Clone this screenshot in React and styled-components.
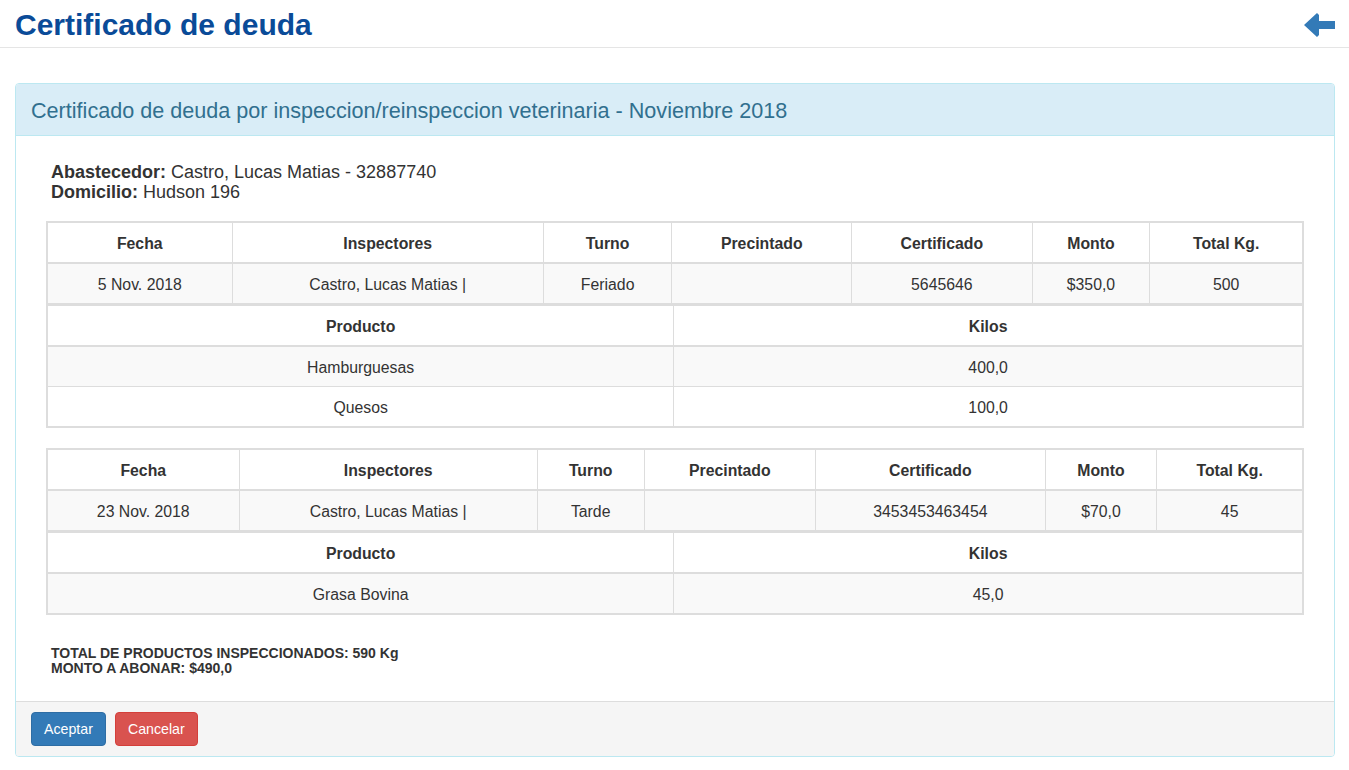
import React from "react";
import styled, { createGlobalStyle } from "styled-components";

const GlobalStyle = createGlobalStyle`
  html, body { margin: 0; padding: 0; background: #fff; }
  body {
    font-family: "Liberation Sans", Arial, Helvetica, sans-serif;
    font-size: 14px;
    line-height: 20px;
    color: #333;
  }
  * { box-sizing: border-box; }
`;

const Page = styled.div`
  display: flex;
  flex-direction: column;
`;

const TopBar = styled.header`
  display: flex;
  align-items: center;
  justify-content: space-between;
  height: 48px;
  padding: 3px 14px 0 15px;
  border-bottom: 1px solid #e5e5e5;
`;

const Title = styled.h1`
  margin: 0;
  font-size: 30px;
  line-height: 34px;
  font-weight: bold;
  color: #0a4b98;
`;

const BackLink = styled.a`
  display: flex;
  align-items: center;
  cursor: pointer;
  margin-top: -1px;
`;

const Content = styled.main`
  padding: 35px 14px 13px 15px;
`;

const Panel = styled.section`
  border: 1px solid #bce8f1;
  border-radius: 4px;
  background: #fff;
  overflow: hidden;
`;

const PanelHeading = styled.div`
  background: #d9edf7;
  border-bottom: 1px solid #bce8f1;
  padding: 16px 15px 14px;
  color: #31708f;
  font-size: 21.6px;
  line-height: 21px;
`;

const PanelBody = styled.div`
  padding: 26px 30px 25px 30px;
  display: flex;
  flex-direction: column;
`;

const Info = styled.div`
  margin: 0 0 19px 5px;
  font-size: 18px;
  line-height: 20px;
  b { font-weight: bold; }
`;

const Block = styled.div`
  border: 1px solid #ddd;
  margin-bottom: ${(p) => (p.$last ? "0" : "20px")};
`;

const Table = styled.table`
  width: 100%;
  border-collapse: collapse;
  table-layout: fixed;
  border: 1px solid #ddd;
  font-size: 15.8px;
  ${(p) => (p.$sub ? "border-top: 2px solid #ddd;" : "")}
`;

const Th = styled.th`
  border: 1px solid #ddd;
  border-bottom-width: 2px;
  padding: 10px 8px 8px;
  font-weight: bold;
  text-align: center;
  line-height: 21px;
  background: #fff;
`;

const Tr = styled.tr`
  background: ${(p) => (p.$striped ? "#f9f9f9" : "#fff")};
`;

const Td = styled.td`
  border: 1px solid #ddd;
  padding: 10px 8px 8px;
  text-align: center;
  line-height: 21px;
`;

const Totals = styled.div`
  margin: 31px 0 0 5px;
  font-size: 14px;
  line-height: 15px;
  font-weight: bold;
`;

const PanelFooter = styled.div`
  background: #f5f5f5;
  border-top: 1px solid #ddd;
  padding: 10px 15px;
  display: flex;
  gap: 9px;
`;

const Button = styled.button`
  font-family: inherit;
  font-size: 14.2px;
  line-height: 20px;
  padding: 6px 12px;
  border-radius: 4px;
  color: #fff;
  cursor: pointer;
  border: 1px solid ${(p) => (p.$variant === "danger" ? "#d43f3a" : "#2e6da4")};
  background: ${(p) => (p.$variant === "danger" ? "#d9534f" : "#337ab7")};
`;

const certificates = [
  {
    widths: [185, 312, 129, 180, 181, 118, 153],
    fecha: "5 Nov. 2018",
    inspectores: "Castro, Lucas Matias |",
    turno: "Feriado",
    precintado: "",
    certificado: "5645646",
    monto: "$350,0",
    total: "500",
    productos: [
      ["Hamburguesas", "400,0"],
      ["Quesos", "100,0"],
    ],
  },
  {
    widths: [192, 299, 107, 172, 230, 112, 146],
    fecha: "23 Nov. 2018",
    inspectores: "Castro, Lucas Matias |",
    turno: "Tarde",
    precintado: "",
    certificado: "3453453463454",
    monto: "$70,0",
    total: "45",
    productos: [["Grasa Bovina", "45,0"]],
  },
];

const headers = ["Fecha", "Inspectores", "Turno", "Precintado", "Certificado", "Monto", "Total Kg."];

const pct = (w, total) => `${((w / total) * 100).toFixed(3)}%`;

function ArrowLeft() {
  return (
    <svg width="31" height="24" viewBox="0 0 31 24">
      <path d="M0 12 L13 0 L15 2 L15 8 L31 8 L31 16 L15 16 L15 22 L13 24 Z" fill="#337ab7" />
    </svg>
  );
}

function CertificateBlock({ data, last }) {
  const sum = data.widths.reduce((a, b) => a + b, 0);
  return (
    <Block $last={last}>
      <Table>
        <colgroup>
          {data.widths.map((w, i) => (
            <col key={i} style={{ width: pct(w, sum) }} />
          ))}
        </colgroup>
        <thead>
          <tr>
            {headers.map((h) => (
              <Th key={h}>{h}</Th>
            ))}
          </tr>
        </thead>
        <tbody>
          <Tr $striped>
            <Td>{data.fecha}</Td>
            <Td>{data.inspectores}</Td>
            <Td>{data.turno}</Td>
            <Td>{data.precintado}</Td>
            <Td>{data.certificado}</Td>
            <Td>{data.monto}</Td>
            <Td>{data.total}</Td>
          </Tr>
        </tbody>
      </Table>
      <Table $sub>
        <colgroup>
          <col style={{ width: "49.9%" }} />
          <col style={{ width: "50.1%" }} />
        </colgroup>
        <thead>
          <tr>
            <Th>Producto</Th>
            <Th>Kilos</Th>
          </tr>
        </thead>
        <tbody>
          {data.productos.map(([p, k], i) => (
            <Tr key={p} $striped={i % 2 === 0}>
              <Td>{p}</Td>
              <Td>{k}</Td>
            </Tr>
          ))}
        </tbody>
      </Table>
    </Block>
  );
}

export default function App() {
  return (
    <Page>
      <GlobalStyle />
      <TopBar>
        <Title>Certificado de deuda</Title>
        <BackLink aria-label="Volver">
          <ArrowLeft />
        </BackLink>
      </TopBar>
      <Content>
        <Panel>
          <PanelHeading>
            Certificado de deuda por inspeccion/reinspeccion veterinaria - Noviembre 2018
          </PanelHeading>
          <PanelBody>
            <Info>
              <div>
                <b>Abastecedor:</b> Castro, Lucas Matias - 32887740
              </div>
              <div>
                <b>Domicilio:</b> Hudson 196
              </div>
            </Info>
            {certificates.map((c, i) => (
              <CertificateBlock key={i} data={c} last={i === certificates.length - 1} />
            ))}
            <Totals>
              <div>TOTAL DE PRODUCTOS INSPECCIONADOS: 590 Kg</div>
              <div>MONTO A ABONAR: $490,0</div>
            </Totals>
          </PanelBody>
          <PanelFooter>
            <Button>Aceptar</Button>
            <Button $variant="danger">Cancelar</Button>
          </PanelFooter>
        </Panel>
      </Content>
    </Page>
  );
}
